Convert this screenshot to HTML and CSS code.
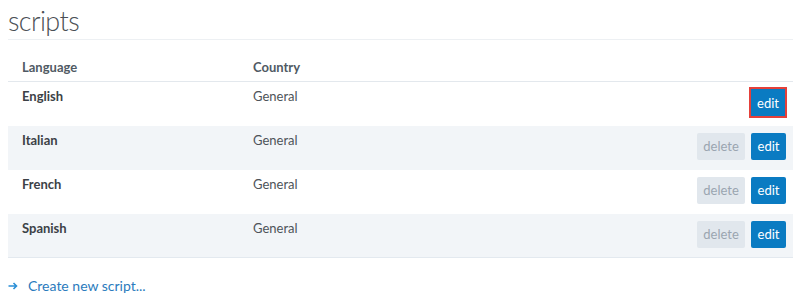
FILE: index.html
```html
<!DOCTYPE html>
<html lang="en">
<head>
  <meta charset="UTF-8" />
  <title>scripts</title>
  <link rel="stylesheet" href="styles.css">
</head>
<body>
  <div class="page">
    <h1 class="title">scripts</h1>

    <table class="scripts">
      <thead>
        <tr>
          <th class="col-lang">Language</th>
          <th>Country</th>
          <th></th>
        </tr>
      </thead>
      <tbody>
        <tr>
          <td class="lang">English</td>
          <td>General</td>
          <td class="actions"><button class="btn edit selected">edit</button></td>
        </tr>
        <tr class="alt">
          <td class="lang">Italian</td>
          <td>General</td>
          <td class="actions"><button class="btn delete">delete</button><button class="btn edit">edit</button></td>
        </tr>
        <tr>
          <td class="lang">French</td>
          <td>General</td>
          <td class="actions"><button class="btn delete">delete</button><button class="btn edit">edit</button></td>
        </tr>
        <tr class="alt">
          <td class="lang">Spanish</td>
          <td>General</td>
          <td class="actions"><button class="btn delete">delete</button><button class="btn edit">edit</button></td>
        </tr>
      </tbody>
    </table>

    <a class="create" href="#">
      <svg width="10" height="8" viewBox="0 0 10 8"><path d="M0.5 4H8.5M5.5 1L8.5 4L5.5 7" fill="none" stroke="#2b8fd6" stroke-width="1.6"/></svg>
      <span>Create new script...</span>
    </a>
  </div>
</body>
</html>
```

FILE: styles.css
```css
body, html {
  margin: 0;
  padding: 0;
  background: #fff;
  font-family: 'Lato', 'Noto Sans', sans-serif;
  color: #333;
}
.page {
  padding: 0 5px 0 8px;
}
.title {
  margin: 0;
  padding-top: 6px;
  height: 33px;
  font-size: 27px;
  font-weight: 300;
  letter-spacing: -0.6px;
  line-height: 30px;
  color: #4a4f55;
  border-bottom: 1px solid #edf0f3;
}
.scripts {
  width: 100%;
  border-collapse: collapse;
  font-size: 13px;
  border-bottom: 1px solid #e3e9ef;
}
.scripts th {
  text-align: left;
  font-weight: 700;
  color: #505a64;
  padding: 18px 14px 5px;
  line-height: 18px;
  border-bottom: 1px solid #e3e8ed;
}
.scripts th.col-lang {
  width: 203px;
}
.scripts td {
  height: 44px;
  box-sizing: border-box;
  padding: 5px 14px 0;
  vertical-align: top;
  line-height: 18px;
  color: #4d5358;
}
.scripts td.lang {
  font-weight: 700;
  color: #3c4146;
}
.scripts tr.alt td {
  background: #f2f5f8;
}
.scripts td.actions {
  text-align: right;
  padding: 7px 7px 0 0;
  white-space: nowrap;
}
.btn {
  height: 27px;
  border: none;
  border-radius: 2px;
  font-family: inherit;
  font-size: 13px;
  padding: 0;
  margin-left: 6px;
  cursor: pointer;
}
.btn.edit {
  background: #0a7bc2;
  color: #fff;
  width: 35px;
}
.btn.delete {
  background: #e1e7ed;
  color: #9aa5b0;
  width: 48px;
}
.btn.selected {
  border-radius: 0;
  width: 34px;
  margin-right: 1px;
  outline: 2px solid #e5403a;
  outline-offset: 0;
}
.create {
  display: flex;
  align-items: center;
  gap: 10px;
  margin-top: 19px;
  color: #2b7bbd;
  font-size: 14px;
  text-decoration: none;
}
```
